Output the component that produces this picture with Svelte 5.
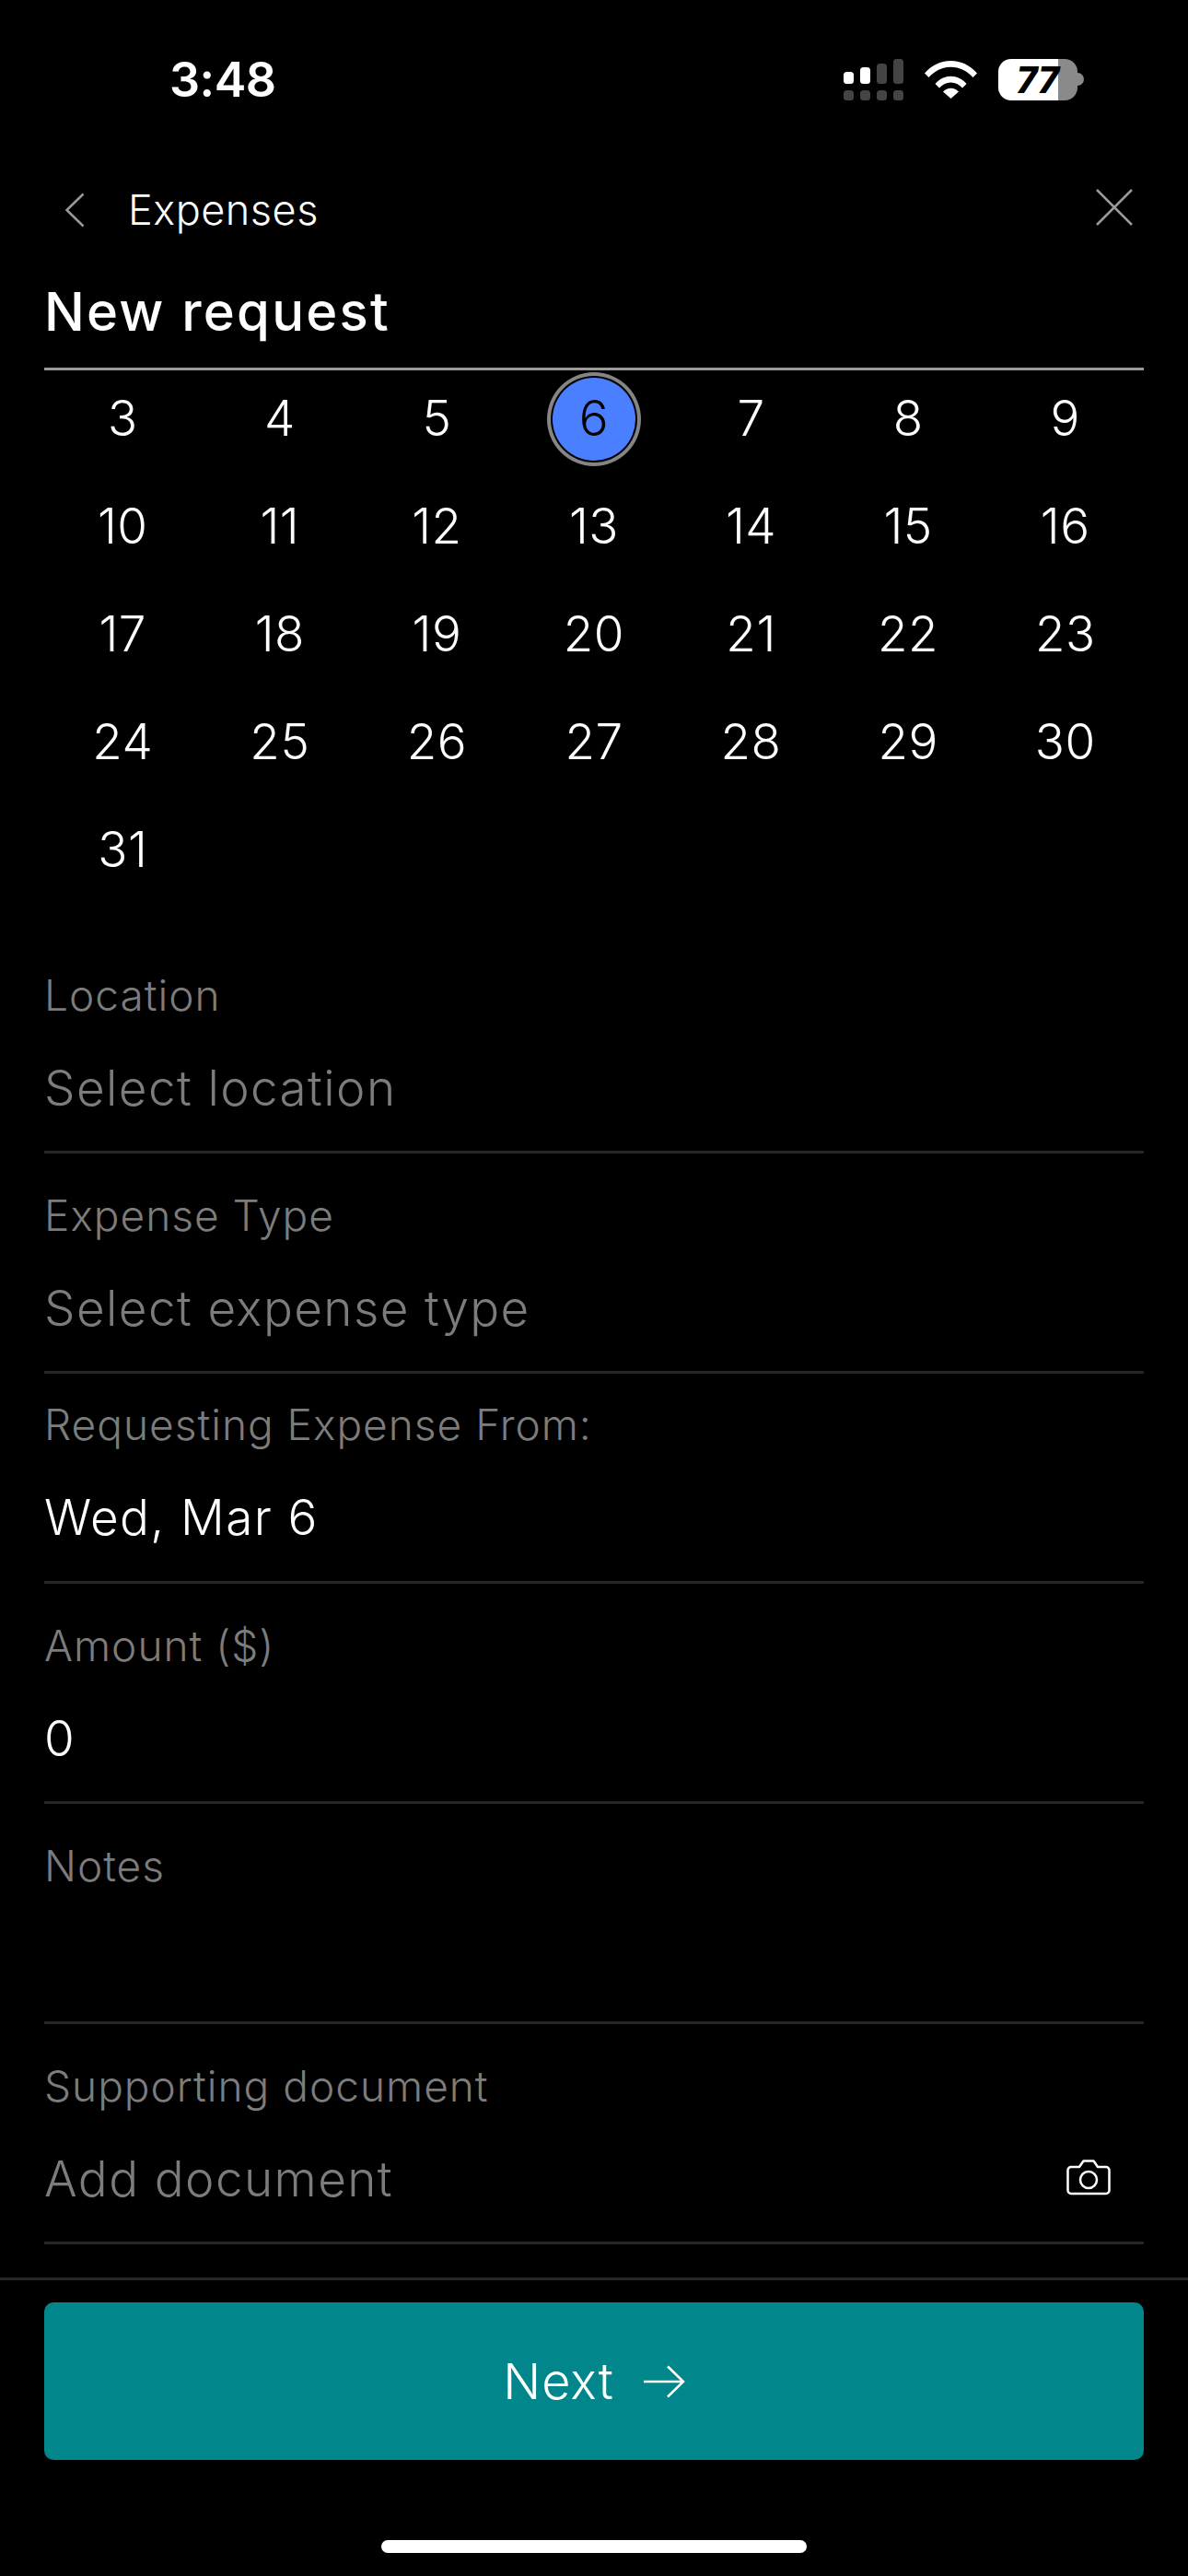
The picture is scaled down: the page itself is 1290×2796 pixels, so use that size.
<script lang="ts">
  const days = Array.from({ length: 29 }, (_, i) => i + 3);
  const selectedDay = 6;

  const fields = [
    { label: 'Location', value: 'Select location', empty: true },
    { label: 'Expense Type', value: 'Select expense type', empty: true },
    { label: 'Requesting Expense From:', value: 'Wed, Mar 6', empty: false, compact: true },
    { label: 'Amount ($)', value: '0', empty: false },
    { label: 'Notes', value: '', empty: true },
    { label: 'Supporting document', value: 'Add document', empty: true, camera: true },
  ];
</script>

<div class="screen">
  <div class="status">
    <span class="time">3:48</span>
    <div class="status-icons">
      <svg class="signal" width="65" height="45" viewBox="0 0 65 45">
        <rect x="0" y="14" width="11" height="13" rx="3.5" fill="#fff" />
        <rect x="18" y="9" width="11" height="18" rx="3.5" fill="#fff" />
        <rect x="36" y="5" width="11" height="22" rx="3.5" fill="#444" />
        <rect x="54" y="0" width="11" height="27" rx="3.5" fill="#444" />
        <rect x="0" y="34" width="11" height="11" rx="3.5" fill="#444" />
        <rect x="18" y="34" width="11" height="11" rx="3.5" fill="#444" />
        <rect x="36" y="34" width="11" height="11" rx="3.5" fill="#444" />
        <rect x="54" y="34" width="11" height="11" rx="3.5" fill="#444" />
      </svg>
      <svg class="wifi" width="57" height="41" viewBox="0 0 57 41" fill="#fff">
        <path d="M0 13.5C7.5 4.8 17.5 0 28.5 0S49.5 4.8 57 13.5L52.5 18C46 10.8 37.8 6.8 28.5 6.8S11 10.800 4.500 18Z" />
        <path d="M11.500 25C16 19.800 22 16.800 28.500 16.800S41 19.800 45.500 25L41 29.500C37.500 25.800 33.200 23.600 28.500 23.600S19.500 25.800 16 29.500Z" />
        <path d="M20 33.500C22.200 31.200 25.200 29.800 28.500 29.800S34.800 31.200 37 33.500L28.500 41Z" />
      </svg>
      <div class="battery"><span>77</span></div>
      <span class="battery-nub"></span>
    </div>
  </div>

  <header class="nav">
    <svg class="back" width="22" height="38" viewBox="0 0 22 38" fill="none" stroke="#9a9a9a" stroke-width="2.5">
      <path d="M20.500 1.500 2.500 19l18 17.500" />
    </svg>
    <span class="nav-title">Expenses</span>
    <svg class="close" width="40" height="40" viewBox="0 0 40 40" fill="none" stroke="#9a9a9a" stroke-width="2.5">
      <path d="M1 1l38 38M39 1 1 39" />
    </svg>
  </header>

  <h1>New request</h1>

  <div class="calendar">
    {#each days as day}
      <div class="day">
        <span class:selected={day === selectedDay}>{day}</span>
      </div>
    {/each}
  </div>

  <div class="form">
    {#each fields as field}
      <div class="field" class:compact={field.compact}>
        <div class="label">{field.label}</div>
        <div class="value-row">
          <span class="value" class:empty={field.empty}>{field.value}</span>
          {#if field.camera}
            <svg class="camera" width="48" height="40" viewBox="0 0 48 40" fill="none" stroke="#fff" stroke-width="2.5" stroke-linejoin="round">
              <path d="M5 9h9l4.500-6.500h11L34 9h9a3.500 3.500 0 0 1 3.500 3.500v22A3.500 3.500 0 0 1 43 38H5a3.500 3.500 0 0 1-3.500-3.500v-22A3.500 3.500 0 0 1 5 9Z" />
              <circle cx="24" cy="23" r="9" />
            </svg>
          {/if}
        </div>
      </div>
    {/each}
  </div>

  <footer class="footer">
    <button type="button" class="next">
      Next
      <svg width="45" height="36" viewBox="0 0 45 36" fill="none" stroke="#fff" stroke-width="2.5">
        <path d="M0 18h43M26 1.500 43 18 26 34.500" />
      </svg>
    </button>
    <div class="home-bar"></div>
  </footer>
</div>

<style>
  :global(body) {
    margin: 0;
    background: #000;
  }

  .screen {
    width: 1290px;
    height: 2796px;
    background: #000;
    color: #fff;
    font-family: Inter, 'Open Sans', sans-serif;
    font-weight: 300;
    display: flex;
    flex-direction: column;
    overflow: hidden;
  }

  .status {
    height: 174px;
    box-sizing: border-box;
    padding: 0 113px 0 184px;
    display: flex;
    align-items: flex-start;
    justify-content: space-between;
  }

  .time {
    margin-top: 56px;
    font-size: 52px;
    line-height: 62px;
    font-weight: 600;
    letter-spacing: -0.5px;
  }

  .status-icons {
    margin-top: 64px;
    display: flex;
    align-items: flex-start;
  }

  .wifi {
    margin-left: 23px;
    margin-top: 2px;
  }

  .battery {
    margin-left: 23px;
    width: 86px;
    height: 45px;
    border-radius: 14px;
    background: linear-gradient(90deg, #fff 65px, #8a8a8a 65px);
    display: flex;
    align-items: center;
    justify-content: flex-end;
    padding-right: 20px;
    box-sizing: border-box;
  }

  .battery span {
    color: #000;
    font-size: 39px;
    line-height: 45px;
    font-weight: 800;
    font-style: italic;
  }

  .battery-nub {
    width: 7px;
    height: 14px;
    margin-top: 15px;
    background: #8a8a8a;
    border-radius: 0 7px 7px 0;
  }

  .nav {
    height: 108px;
    padding: 0 60px 0 70px;
    display: flex;
    align-items: center;
  }

  .nav-title {
    margin-left: 47px;
    font-size: 45px;
    line-height: 56px;
    letter-spacing: 0.5px;
  }

  .close {
    margin-left: auto;
    margin-top: -6px;
  }

  h1 {
    margin: 0 48px;
    height: 120px;
    box-sizing: border-box;
    padding-top: 21px;
    border-bottom: 3px solid #9a9a9a;
    font-size: 58px;
    line-height: 70px;
    font-weight: 500;
    letter-spacing: 2.2px;
  }

  .calendar {
    margin: -7px 48px 0;
    display: grid;
    grid-template-columns: repeat(7, 1fr);
    grid-auto-rows: 117px;
  }

  .day {
    display: flex;
    align-items: center;
    justify-content: center;
    font-size: 53px;
    letter-spacing: 0.5px;
  }

  .day span.selected {
    width: 90px;
    height: 90px;
    margin-top: 3px;
    padding-bottom: 3px;
    box-sizing: border-box;
    border-radius: 50%;
    background: #4a80ff;
    color: #000;
    display: flex;
    align-items: center;
    justify-content: center;
    box-shadow: 0 0 0 2px #000, 0 0 0 6px #858585;
  }

  .form {
    margin: 0 48px;
    padding-top: 33px;
  }

  .field {
    height: 239px;
    box-sizing: border-box;
    padding-top: 39px;
    border-bottom: 3px solid #262626;
  }

  .field.compact {
    height: 228px;
    padding-top: 27px;
  }

  .label {
    font-size: 46px;
    line-height: 56px;
    color: #7c7c7c;
    letter-spacing: 1px;
  }

  .value-row {
    margin-top: 38px;
    height: 70px;
    display: flex;
    align-items: center;
    justify-content: space-between;
    padding-right: 36px;
  }

  .value {
    font-size: 53px;
    line-height: 70px;
    letter-spacing: 1.4px;
  }

  .value.empty {
    color: #7c7c7c;
  }

  .camera {
    margin-bottom: 4px;
  }

  .footer {
    margin-top: 36px;
    border-top: 3px solid #262626;
    padding: 24px 48px 0;
  }

  .next {
    width: 100%;
    height: 171px;
    border: 0;
    border-radius: 10px;
    background: #00868b;
    color: #fff;
    font-family: inherit;
    font-weight: 300;
    font-size: 54px;
    letter-spacing: 1px;
    display: flex;
    align-items: center;
    justify-content: center;
    gap: 32px;
  }

  .home-bar {
    width: 462px;
    height: 14px;
    margin: 87px auto 0;
    border-radius: 7px;
    background: #fff;
  }
</style>
